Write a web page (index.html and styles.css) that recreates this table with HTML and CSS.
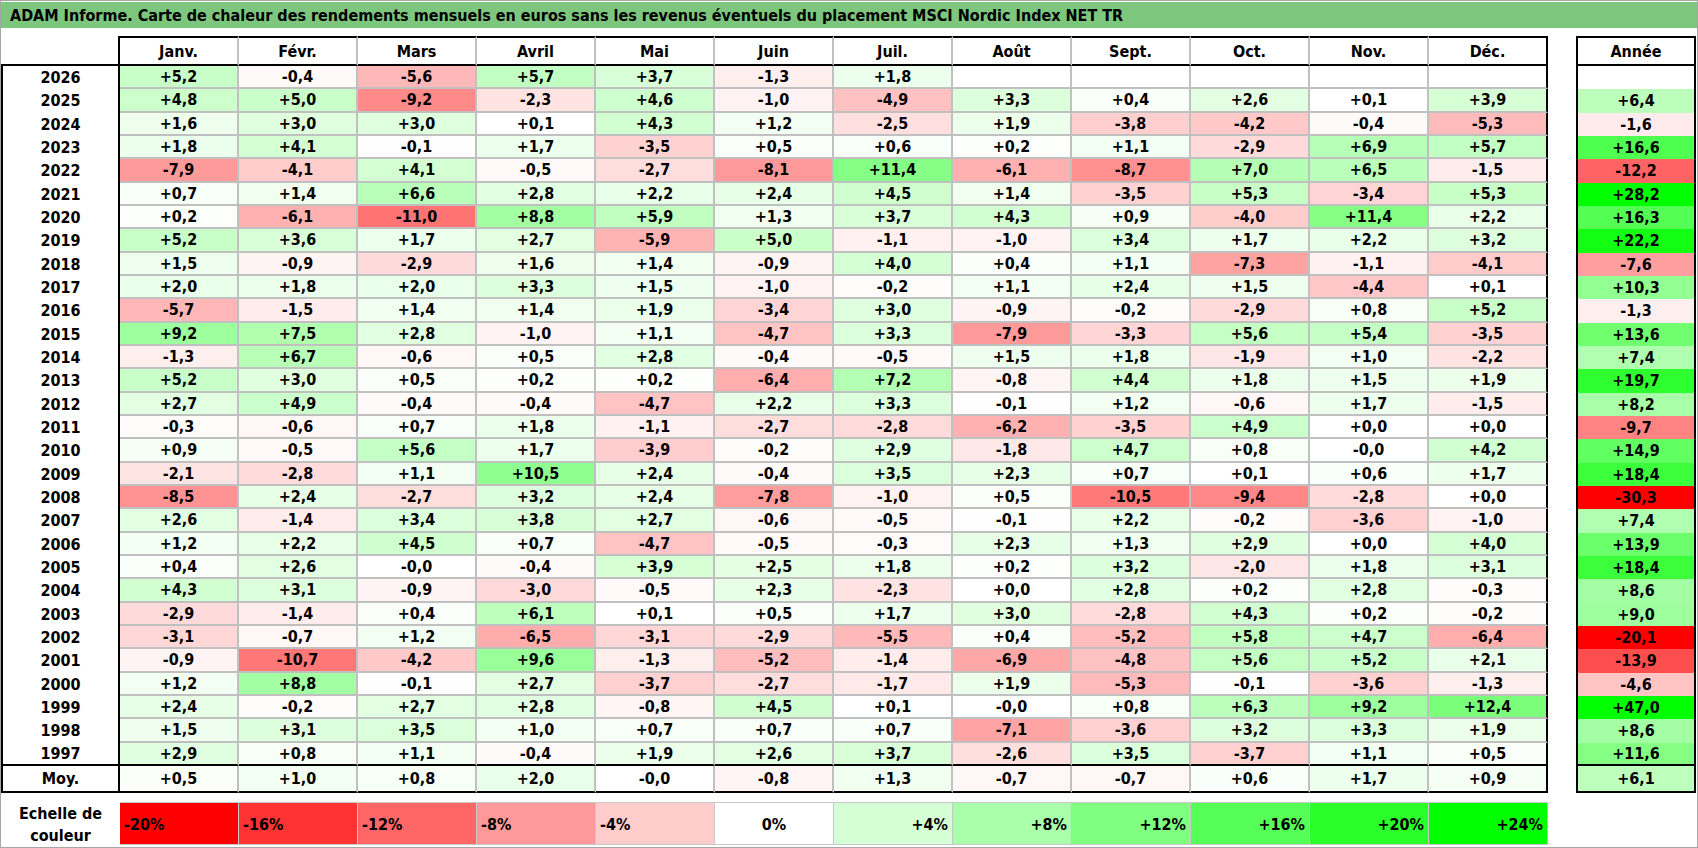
FILE: index.html
```html
<!DOCTYPE html>
<html lang="fr">
<head>
<meta charset="utf-8">
<title>ADAM Informe — MSCI Nordic Index NET TR</title>
<link rel="stylesheet" href="styles.css">
</head>
<body>
<div class="frame">
  <div class="title">ADAM Informe. Carte de chaleur des rendements mensuels en euros sans les revenus éventuels du placement MSCI Nordic Index NET TR</div>
  <div class="sheet">
    <div class="main" id="main">
      <div class="cell corner"></div>
      <div class="cell m h">Janv.</div>
      <div class="cell m h">Févr.</div>
      <div class="cell m h">Mars</div>
      <div class="cell m h">Avril</div>
      <div class="cell m h">Mai</div>
      <div class="cell m h">Juin</div>
      <div class="cell m h">Juil.</div>
      <div class="cell m h">Août</div>
      <div class="cell m h">Sept.</div>
      <div class="cell m h">Oct.</div>
      <div class="cell m h">Nov.</div>
      <div class="cell m h end">Déc.</div>
    </div>
    <div class="annual" id="annual">
      <div class="cell an h">Année</div>
    </div>
  </div>
  <div class="legend" id="legend">
    <div class="lab">Echelle de<br>couleur</div>
  </div>
</div>
<script src="script.js"></script>
</body>
</html>
```

FILE: styles.css
```css
* { box-sizing: border-box; }
html, body { margin: 0; padding: 0; background: #fff; }
body {
  font-family: "DejaVu Sans Condensed", "DejaVu Sans", "Liberation Sans", sans-serif;
  font-stretch: condensed;
  font-weight: bold;
  font-size: 16px;
  color: #000;
}
.frame {
  width: 1698px;
  height: 848px;
  border: 1px solid #a6a6a6;
  display: flex;
  flex-direction: column;
  overflow: hidden;
}
.title {
  margin-top: 1px;
  height: 26px;
  line-height: 28px;
  background: #7dc67d;
  padding-left: 9px;
  white-space: nowrap;
  overflow: hidden;
}
.sheet {
  display: flex;
  gap: 28px;
  margin-top: 8px;
}
.main {
  display: grid;
  grid-template-columns: repeat(13, 119px);
  grid-template-rows: 30px repeat(30, 23.333px) 27px;
}
.annual {
  width: 120px;
  display: grid;
  grid-template-rows: 30px repeat(30, 23.333px) 27px;
}
.cell {
  display: flex;
  align-items: center;
  justify-content: center;
  white-space: nowrap;
}
.corner {
  border-right: 2px solid #000;
  border-bottom: 2px solid #000;
}
.m {
  border-right: 2px solid #c0c0c0;
  border-bottom: 2px solid #c0c0c0;
}
.m.end { border-right-color: #000; }
.h {
  border-top: 2px solid #000;
  border-bottom: 2px solid #000;
}
.yr {
  border-left: 2px solid #000;
  border-right: 2px solid #000;
}
.an {
  border-left: 2px solid #000;
  border-right: 2px solid #000;
}
.last, .avg { border-bottom: 2px solid #000; }
.m.last, .m.avg { border-bottom-color: #000; }
.legend {
  display: flex;
  margin-top: 9px;
  height: 43px;
}
.lab {
  width: 119px;
  text-align: center;
  line-height: 22px;
  padding-top: 1px;
}
.lc {
  width: 119px;
  display: flex;
  align-items: center;
  padding: 2px 4px 0 4px;
  border-top: 1px solid #c8c8c8;
  border-bottom: 1px solid #c8c8c8;
  border-right: 1px solid #c8c8c8;
}
.lc.neg { justify-content: flex-start; }
.lc.zero { justify-content: center; }
.lc.pos { justify-content: flex-end; }
```

FILE: script.js
```js
const rows = [
  ["2026", "+5,2 -0,4 -5,6 +5,7 +3,7 -1,3 +1,8 _ _ _ _ _", "_"],
  ["2025", "+4,8 +5,0 -9,2 -2,3 +4,6 -1,0 -4,9 +3,3 +0,4 +2,6 +0,1 +3,9", "+6,4"],
  ["2024", "+1,6 +3,0 +3,0 +0,1 +4,3 +1,2 -2,5 +1,9 -3,8 -4,2 -0,4 -5,3", "-1,6"],
  ["2023", "+1,8 +4,1 -0,1 +1,7 -3,5 +0,5 +0,6 +0,2 +1,1 -2,9 +6,9 +5,7", "+16,6"],
  ["2022", "-7,9 -4,1 +4,1 -0,5 -2,7 -8,1 +11,4 -6,1 -8,7 +7,0 +6,5 -1,5", "-12,2"],
  ["2021", "+0,7 +1,4 +6,6 +2,8 +2,2 +2,4 +4,5 +1,4 -3,5 +5,3 -3,4 +5,3", "+28,2"],
  ["2020", "+0,2 -6,1 -11,0 +8,8 +5,9 +1,3 +3,7 +4,3 +0,9 -4,0 +11,4 +2,2", "+16,3"],
  ["2019", "+5,2 +3,6 +1,7 +2,7 -5,9 +5,0 -1,1 -1,0 +3,4 +1,7 +2,2 +3,2", "+22,2"],
  ["2018", "+1,5 -0,9 -2,9 +1,6 +1,4 -0,9 +4,0 +0,4 +1,1 -7,3 -1,1 -4,1", "-7,6"],
  ["2017", "+2,0 +1,8 +2,0 +3,3 +1,5 -1,0 -0,2 +1,1 +2,4 +1,5 -4,4 +0,1", "+10,3"],
  ["2016", "-5,7 -1,5 +1,4 +1,4 +1,9 -3,4 +3,0 -0,9 -0,2 -2,9 +0,8 +5,2", "-1,3"],
  ["2015", "+9,2 +7,5 +2,8 -1,0 +1,1 -4,7 +3,3 -7,9 -3,3 +5,6 +5,4 -3,5", "+13,6"],
  ["2014", "-1,3 +6,7 -0,6 +0,5 +2,8 -0,4 -0,5 +1,5 +1,8 -1,9 +1,0 -2,2", "+7,4"],
  ["2013", "+5,2 +3,0 +0,5 +0,2 +0,2 -6,4 +7,2 -0,8 +4,4 +1,8 +1,5 +1,9", "+19,7"],
  ["2012", "+2,7 +4,9 -0,4 -0,4 -4,7 +2,2 +3,3 -0,1 +1,2 -0,6 +1,7 -1,5", "+8,2"],
  ["2011", "-0,3 -0,6 +0,7 +1,8 -1,1 -2,7 -2,8 -6,2 -3,5 +4,9 +0,0 +0,0", "-9,7"],
  ["2010", "+0,9 -0,5 +5,6 +1,7 -3,9 -0,2 +2,9 -1,8 +4,7 +0,8 -0,0 +4,2", "+14,9"],
  ["2009", "-2,1 -2,8 +1,1 +10,5 +2,4 -0,4 +3,5 +2,3 +0,7 +0,1 +0,6 +1,7", "+18,4"],
  ["2008", "-8,5 +2,4 -2,7 +3,2 +2,4 -7,8 -1,0 +0,5 -10,5 -9,4 -2,8 +0,0", "-30,3"],
  ["2007", "+2,6 -1,4 +3,4 +3,8 +2,7 -0,6 -0,5 -0,1 +2,2 -0,2 -3,6 -1,0", "+7,4"],
  ["2006", "+1,2 +2,2 +4,5 +0,7 -4,7 -0,5 -0,3 +2,3 +1,3 +2,9 +0,0 +4,0", "+13,9"],
  ["2005", "+0,4 +2,6 -0,0 -0,4 +3,9 +2,5 +1,8 +0,2 +3,2 -2,0 +1,8 +3,1", "+18,4"],
  ["2004", "+4,3 +3,1 -0,9 -3,0 -0,5 +2,3 -2,3 +0,0 +2,8 +0,2 +2,8 -0,3", "+8,6"],
  ["2003", "-2,9 -1,4 +0,4 +6,1 +0,1 +0,5 +1,7 +3,0 -2,8 +4,3 +0,2 -0,2", "+9,0"],
  ["2002", "-3,1 -0,7 +1,2 -6,5 -3,1 -2,9 -5,5 +0,4 -5,2 +5,8 +4,7 -6,4", "-20,1"],
  ["2001", "-0,9 -10,7 -4,2 +9,6 -1,3 -5,2 -1,4 -6,9 -4,8 +5,6 +5,2 +2,1", "-13,9"],
  ["2000", "+1,2 +8,8 -0,1 +2,7 -3,7 -2,7 -1,7 +1,9 -5,3 -0,1 -3,6 -1,3", "-4,6"],
  ["1999", "+2,4 -0,2 +2,7 +2,8 -0,8 +4,5 +0,1 -0,0 +0,8 +6,3 +9,2 +12,4", "+47,0"],
  ["1998", "+1,5 +3,1 +3,5 +1,0 +0,7 +0,7 +0,7 -7,1 -3,6 +3,2 +3,3 +1,9", "+8,6"],
  ["1997", "+2,9 +0,8 +1,1 -0,4 +1,9 +2,6 +3,7 -2,6 +3,5 -3,7 +1,1 +0,5", "+11,6"]
];
const avg = ["Moy.", "+0,5 +1,0 +0,8 +2,0 -0,0 -0,8 +1,3 -0,7 -0,7 +0,6 +1,7 +0,9", "+6,1"];

function heat(v) {
  if (v >= 0) {
    const c = Math.round(255 * (1 - Math.min(v / 24, 1)));
    return "rgb(" + c + ",255," + c + ")";
  }
  const c = Math.round(255 * (1 - Math.min(-v / 20, 1)));
  return "rgb(255," + c + "," + c + ")";
}

function makeCell(cls, text) {
  const d = document.createElement("div");
  d.className = "cell " + cls;
  if (text && text !== "_") {
    d.textContent = text;
    d.style.background = heat(parseFloat(text.replace(",", ".")));
  }
  return d;
}

const main = document.getElementById("main");
const annual = document.getElementById("annual");

function addRow(row, extra) {
  const y = document.createElement("div");
  y.className = "cell yr" + extra;
  y.textContent = row[0];
  main.appendChild(y);
  row[1].split(" ").forEach(function (t, i) {
    main.appendChild(makeCell("m" + (i === 11 ? " end" : "") + extra, t));
  });
  annual.appendChild(makeCell("an" + extra, row[2]));
}

rows.forEach(function (r, i) {
  addRow(r, i === rows.length - 1 ? " last" : "");
});
addRow(avg, " avg");

const legend = document.getElementById("legend");
[-20, -16, -12, -8, -4, 0, 4, 8, 12, 16, 20, 24].forEach(function (v) {
  const d = document.createElement("div");
  d.className = "lc " + (v < 0 ? "neg" : v === 0 ? "zero" : "pos");
  d.textContent = (v > 0 ? "+" : "") + v + "%";
  d.style.background = heat(v);
  legend.appendChild(d);
});
```
